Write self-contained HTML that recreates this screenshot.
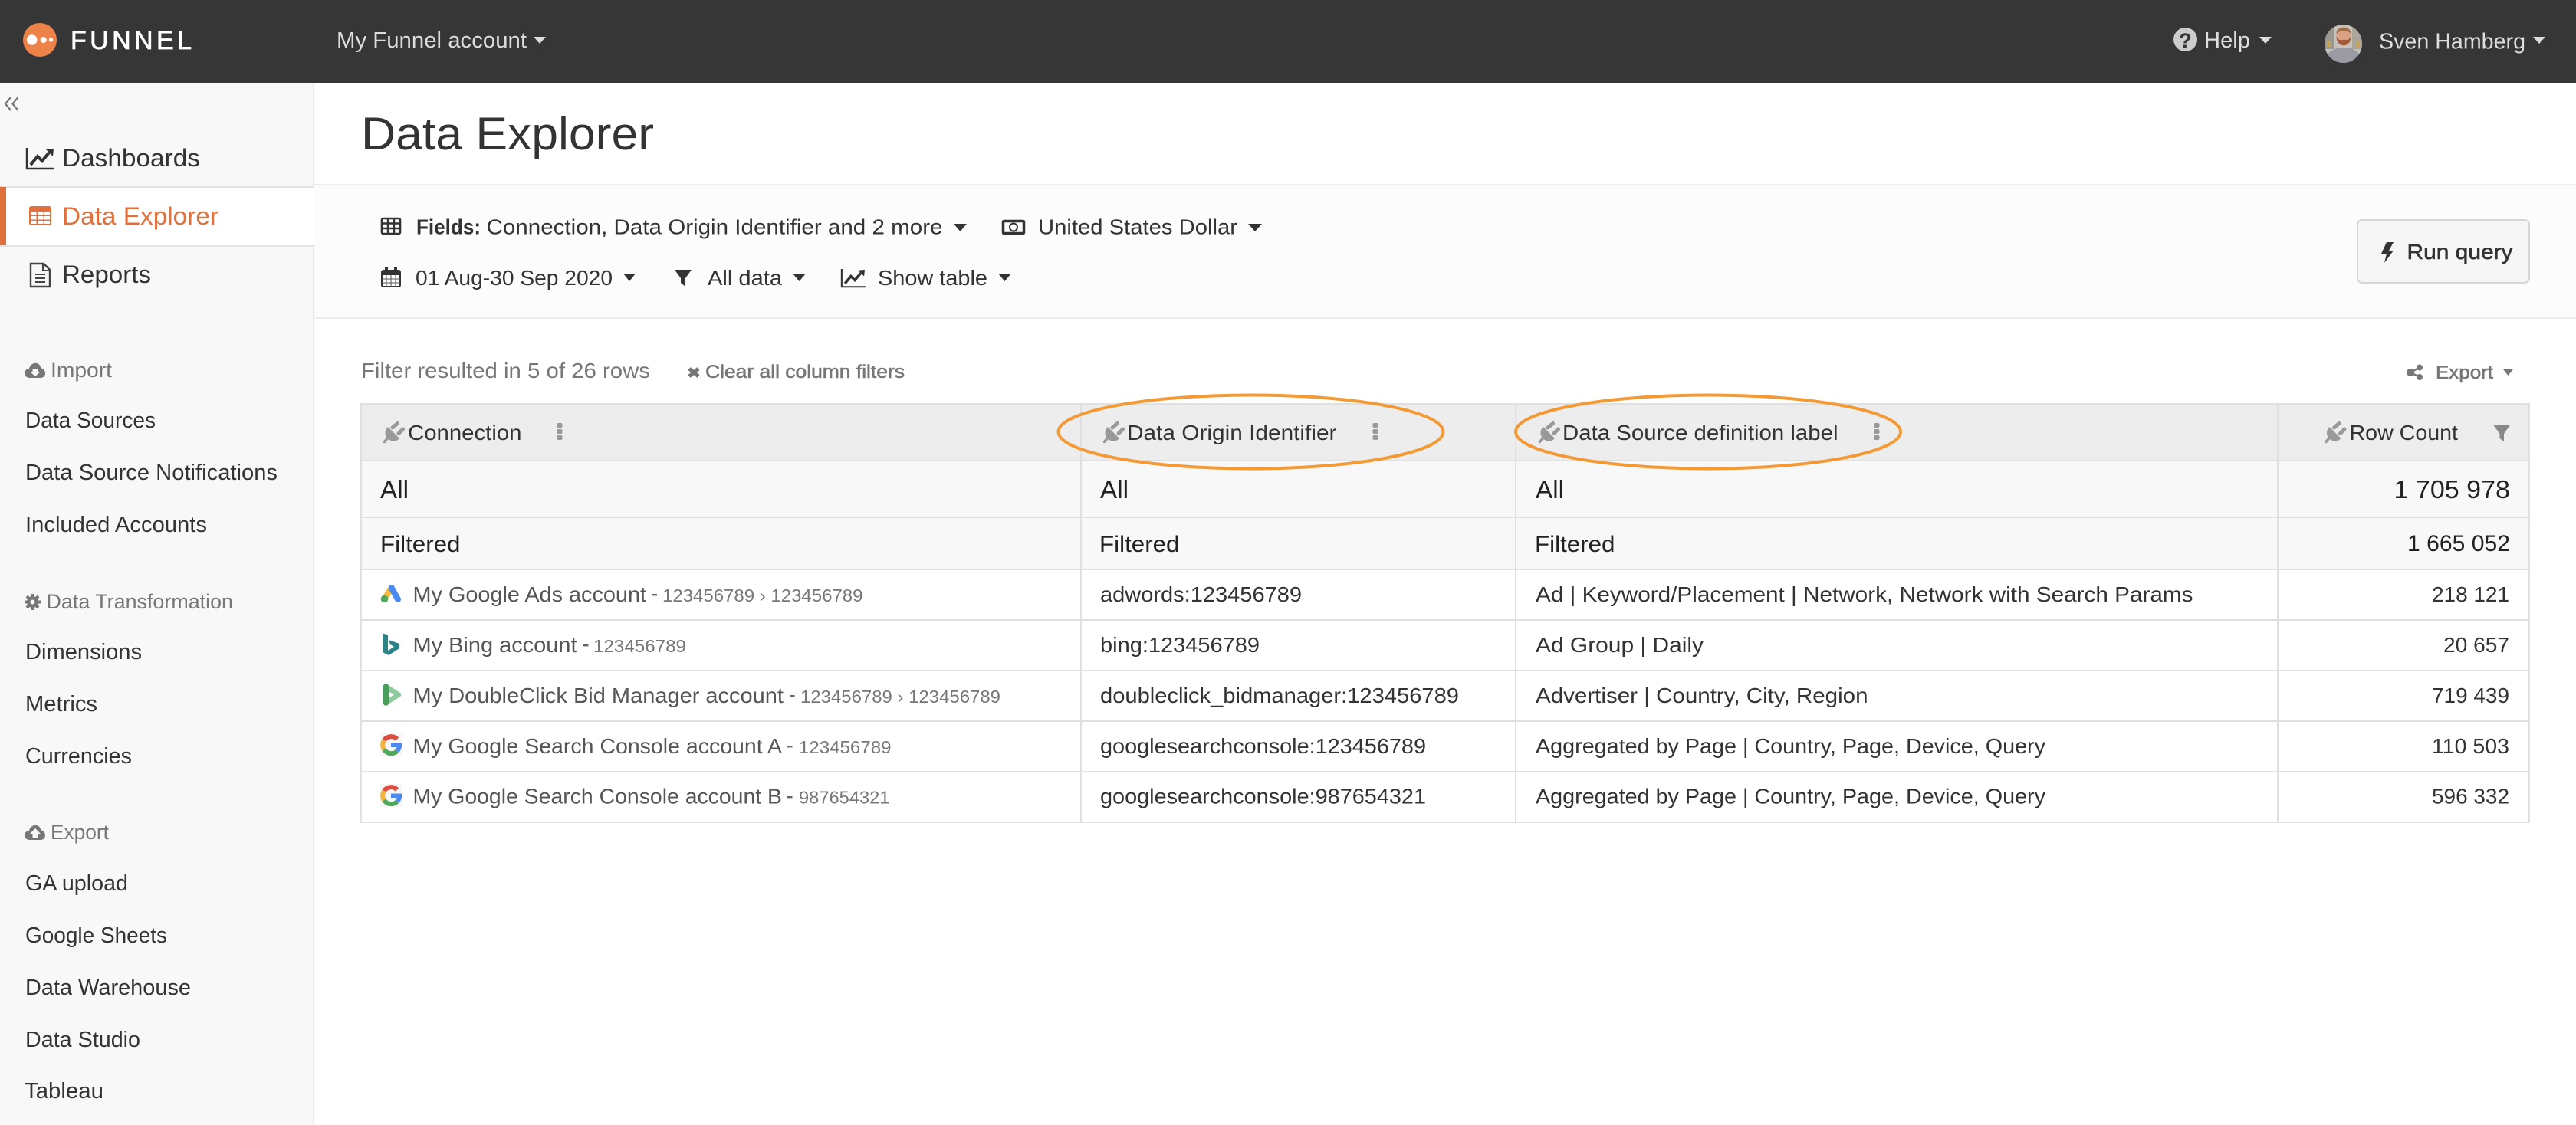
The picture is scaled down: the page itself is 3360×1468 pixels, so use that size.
<!DOCTYPE html>
<html><head><meta charset="utf-8"><title>Data Explorer</title>
<style>
html,body{margin:0;padding:0;background:#fff;width:3360px;height:1468px;overflow:hidden}
svg{display:block}
text{font-family:"Liberation Sans",sans-serif;white-space:pre}
.n{font-size:32px;fill:#333}
.s{font-size:29px;fill:#333}
.h{font-size:27px;fill:#777}
.t{font-size:28px;fill:#333}
.m{font-size:28px;fill:#555}
.id{font-size:23.5px;fill:#777}
.d{font-size:28px;fill:#333}
.a{font-size:33px;fill:#222}
.f{font-size:30px;fill:#222}
.th{font-size:28px;fill:#333}
.top{font-size:29px;fill:#ddd}
</style></head><body>
<svg width="3360" height="1468" viewBox="0 0 3360 1468" xmlns="http://www.w3.org/2000/svg">
<defs>
<g id="plug" fill="#999"><path d="M6 7 L21 22 C16 28 8 25 5 22 C2 18 1 12 6 7Z"/><path d="M12 8 L18.500 2.500 M20 15.500 L25.500 10" stroke="#999" stroke-width="5" stroke-linecap="round"/><path d="M7 20 L1.500 26.500" stroke="#999" stroke-width="3.500" stroke-linecap="round"/></g>
<g id="keb" fill="#999"><rect x="0" y="0" width="7" height="6" rx="2"/><rect x="0" y="8" width="7" height="6" rx="2"/><rect x="0" y="16" width="7" height="6" rx="2"/></g>
<g id="g"><rect x="0" y="0" width="28" height="30" fill="#f6f6f6"/><g fill="none" stroke-width="6"><path d="M22 7.500 A11 11 0 0 0 5 9" stroke="#dc4e41"/><path d="M5 9 A11 11 0 0 0 5 21" stroke="#f2b53c"/><path d="M5 21 A11 11 0 0 0 22 23" stroke="#4fa95c"/><path d="M22 23 A11 11 0 0 0 25 15" stroke="#4c8af0"/></g><rect x="14" y="12.500" width="14" height="5.500" fill="#4c8af0"/></g>
<g id="chart"><path d="M1 0 V27 H37" fill="none" stroke="#333" stroke-width="2.400"/><path d="M6 22 L15 11 L21 17 L30 6" fill="none" stroke="#333" stroke-width="4"/><polygon points="26,2 36,1 35,11" fill="#333"/></g>
<clipPath id="av"><ellipse cx="3056.500" cy="57" rx="24.500" ry="25"/></clipPath>
</defs>

<!-- header -->
<rect x="0" y="0" width="3360" height="108" fill="#363636"/>
<circle cx="52" cy="52" r="22" fill="#ee8349"/>
<circle cx="41.700" cy="52" r="6.800" fill="#fff"/><circle cx="56.700" cy="52" r="4" fill="#fff"/><circle cx="66.500" cy="52" r="2.600" fill="#fff"/>
<text x="92" y="64" font-size="34" fill="#fff" stroke="#fff" stroke-width=".7" textLength="158" lengthAdjust="spacing">FUNNEL</text>
<text x="439" y="62" class="top" textLength="248" lengthAdjust="spacingAndGlyphs">My Funnel account</text>
<polygon points="696,48 712,48 704,57" fill="#ddd"/>
<circle cx="2850.500" cy="51.500" r="15.500" fill="#ccc"/>
<text x="2850.500" y="62" font-size="27" font-weight="bold" fill="#363636" text-anchor="middle">?</text>
<text x="2875" y="62" class="top" textLength="60" lengthAdjust="spacingAndGlyphs">Help</text>
<polygon points="2947,48 2963,48 2955,57" fill="#ddd"/>
<g clip-path="url(#av)">
<rect x="3030" y="30" width="54" height="55" fill="#c6c2ba"/>
<rect x="3032" y="32" width="13" height="32" fill="#9a978f"/><rect x="3068" y="32" width="13" height="32" fill="#aba59a"/>
<rect x="3035" y="54" width="5" height="7" fill="#c4a35a"/><rect x="3073" y="54" width="5" height="7" fill="#c4a35a"/>
<path d="M3032 84 C3033 66 3046 62 3057 62 C3068 62 3080 66 3081 84Z" fill="#9a9ba5"/>
<ellipse cx="3057" cy="47" rx="9.500" ry="12" fill="#d9a283"/>
<path d="M3047.500 48 C3048 63 3066 63 3066.500 48 L3063 52 H3051Z" fill="#a2593a"/>
<path d="M3047.500 44 C3047 33 3067 33 3066.500 44 C3062 39 3052 39 3047.500 44Z" fill="#a06b47"/>
</g>
<text x="3103" y="63.500" class="top" textLength="191" lengthAdjust="spacingAndGlyphs">Sven Hamberg</text>
<polygon points="3304,48 3320,48 3312,57" fill="#ddd"/>

<!-- sidebar -->
<rect x="0" y="108" width="409" height="1360" fill="#f8f8f8"/>
<rect x="408" y="108" width="2" height="1360" fill="#eaeaea"/>
<path d="M14 127 L7 135.500 L14 144 M23.500 127 L16.500 135.500 L23.500 144" fill="none" stroke="#777" stroke-width="2.200"/>
<use href="#chart" x="34" y="193"/>
<text x="81" y="217" class="n" textLength="180" lengthAdjust="spacingAndGlyphs">Dashboards</text>
<rect x="0" y="243.500" width="409" height="77.500" fill="#fff"/>
<rect x="0" y="243" width="409" height="2" fill="#e3e3e3"/><rect x="0" y="320" width="409" height="2" fill="#e3e3e3"/>
<rect x="0" y="244" width="8" height="76" fill="#e0703c"/>
<rect x="38" y="269" width="29" height="25" rx="3" fill="#e0703c"/>
<g fill="#fff"><rect x="40.500" y="276" width="7" height="4.500"/><rect x="49.500" y="276" width="7" height="4.500"/><rect x="58" y="276" width="7" height="4.500"/><rect x="40.500" y="282" width="7" height="4.500"/><rect x="49.500" y="282" width="7" height="4.500"/><rect x="58" y="282" width="7" height="4.500"/><rect x="40.500" y="288" width="7" height="4"/><rect x="49.500" y="288" width="7" height="4"/><rect x="58" y="288" width="7" height="4"/></g>
<text x="81" y="293" class="n" style="fill:#e0703c" textLength="204" lengthAdjust="spacingAndGlyphs">Data Explorer</text>
<path d="M40 344 H57 L65 352 V374 H40Z" fill="none" stroke="#444" stroke-width="2.400"/><path d="M56 344 V353 H65" fill="none" stroke="#444" stroke-width="2"/><path d="M46 358 H59 M46 363 H59 M46 368 H59" stroke="#444" stroke-width="2"/>
<text x="81" y="369" class="n" textLength="116" lengthAdjust="spacingAndGlyphs">Reports</text>

<path d="M39 493 C33 493 31 488 33 484 C34 482 36 481 38 481 C39 476 44 473 48 474 C51 475 53 477 53 480 C57 481 59 484 59 487 C59 491 56 493 53 493Z" fill="#777"/><path d="M42.500 481 H49.500 V485 H53 L46 491 L39 485 H42.500Z" fill="#f8f8f8"/>
<text x="66" y="492" class="h" textLength="80" lengthAdjust="spacingAndGlyphs">Import</text>
<text x="33" y="558" class="s" textLength="170" lengthAdjust="spacingAndGlyphs">Data Sources</text>
<text x="33" y="626" class="s" textLength="329" lengthAdjust="spacingAndGlyphs">Data Source Notifications</text>
<text x="33" y="694" class="s" textLength="237" lengthAdjust="spacingAndGlyphs">Included Accounts</text>
<path d="M42.500 775 V796 M32 785.500 H53 M35 778 L50 793 M50 778 L35 793" stroke="#777" stroke-width="4"/><circle cx="42.500" cy="785.500" r="7.500" fill="#777"/><circle cx="42.500" cy="785.500" r="3" fill="#f8f8f8"/>
<text x="60.500" y="794" class="h" textLength="243.500" lengthAdjust="spacingAndGlyphs">Data Transformation</text>
<text x="33" y="860" class="s" textLength="152" lengthAdjust="spacingAndGlyphs">Dimensions</text>
<text x="33" y="928" class="s" textLength="94" lengthAdjust="spacingAndGlyphs">Metrics</text>
<text x="33" y="996" class="s" textLength="139" lengthAdjust="spacingAndGlyphs">Currencies</text>
<path d="M39 1096 C33 1096 31 1091 33 1087 C34 1085 36 1084 38 1084 C39 1079 44 1076 48 1077 C51 1078 53 1080 53 1083 C57 1084 59 1087 59 1090 C59 1094 56 1096 53 1096Z" fill="#777"/><path d="M42.500 1094 H49.500 V1088 H53 L46 1081 L39 1088 H42.500Z" fill="#f8f8f8"/>
<text x="66" y="1095" class="h" textLength="76" lengthAdjust="spacingAndGlyphs">Export</text>
<text x="33" y="1162" class="s" textLength="134" lengthAdjust="spacingAndGlyphs">GA upload</text>
<text x="33" y="1230" class="s" textLength="185" lengthAdjust="spacingAndGlyphs">Google Sheets</text>
<text x="33" y="1298" class="s" textLength="216" lengthAdjust="spacingAndGlyphs">Data Warehouse</text>
<text x="33" y="1366" class="s" textLength="150" lengthAdjust="spacingAndGlyphs">Data Studio</text>
<text x="32" y="1433" class="s" textLength="103" lengthAdjust="spacingAndGlyphs">Tableau</text>

<!-- title -->
<text x="471" y="195" font-size="60" fill="#333" textLength="382" lengthAdjust="spacingAndGlyphs">Data Explorer</text>
<rect x="410" y="240" width="2950" height="2" fill="#eee"/>
<rect x="410" y="242" width="2950" height="172" fill="#fcfcfc"/>
<rect x="410" y="414" width="2950" height="2" fill="#eee"/>

<!-- toolbar -->
<rect x="498" y="285" width="24" height="20" rx="2" fill="none" stroke="#333" stroke-width="2.600"/>
<path d="M498 291.500 H522 M498 298 H522 M506 285 V305 M514 285 V305" stroke="#333" stroke-width="2.400"/>
<text x="543" y="305.500" class="t" font-weight="bold" textLength="84" lengthAdjust="spacingAndGlyphs">Fields:</text>
<text x="634.500" y="305.500" class="t" textLength="595" lengthAdjust="spacingAndGlyphs">Connection, Data Origin Identifier and 2 more</text>
<polygon points="1244,292 1261,292 1252.500,302" fill="#333"/>
<rect x="1308.500" y="288.500" width="27" height="16" rx="1" fill="none" stroke="#333" stroke-width="3.500"/><circle cx="1322" cy="296.500" r="5" fill="none" stroke="#333" stroke-width="2"/>
<text x="1354" y="305.500" class="t" textLength="260" lengthAdjust="spacingAndGlyphs">United States Dollar</text>
<polygon points="1628,292 1646,292 1637,302" fill="#333"/>

<rect x="498" y="353" width="24" height="21" rx="2" fill="#fff" stroke="#333" stroke-width="2"/>
<path d="M498 356.500 H522" stroke="#333" stroke-width="5"/><path d="M498 364 H522 M498 369 H522 M504 359 V374 M510 359 V374 M516 359 V374" stroke="#555" stroke-width="1"/>
<rect x="502" y="348" width="4" height="9" rx="1.500" fill="#333"/><rect x="514" y="348" width="4" height="9" rx="1.500" fill="#333"/>
<text x="542" y="372" class="t" textLength="257" lengthAdjust="spacingAndGlyphs">01 Aug-30 Sep 2020</text>
<polygon points="813,357 829,357 821,367" fill="#333"/>
<path d="M880 352 H902 L894 363 V374 L888 369 V363Z" fill="#333"/>
<text x="923" y="372" class="t" textLength="97" lengthAdjust="spacingAndGlyphs">All data</text>
<polygon points="1034,357 1051,357 1042.500,367" fill="#333"/>
<use href="#chart" transform="translate(1097 351) scale(.86)"/>
<text x="1145" y="372" class="t" textLength="143" lengthAdjust="spacingAndGlyphs">Show table</text>
<polygon points="1302,357 1319,357 1310.500,367" fill="#333"/>

<rect x="3075" y="287" width="224" height="82" rx="6" fill="#f6f6f6" stroke="#d6d6d6" stroke-width="2"/>
<polygon points="3113,316 3122,316 3116,327 3122,327 3110,343 3113,331 3106,331" fill="#333"/>
<text x="3139.500" y="338" class="t" stroke="#333" stroke-width=".6" textLength="138" lengthAdjust="spacingAndGlyphs">Run query</text>

<!-- filter line -->
<text x="471" y="493" class="h" style="font-size:28px" textLength="377" lengthAdjust="spacingAndGlyphs">Filter resulted in 5 of 26 rows</text>
<path d="M899 481 L911 491 M911 481 L899 491" stroke="#777" stroke-width="5"/>
<text x="920" y="493" font-size="24" fill="#777" stroke="#777" stroke-width=".6" textLength="260" lengthAdjust="spacingAndGlyphs">Clear all column filters</text>
<circle cx="3144" cy="486" r="5" fill="#777"/><circle cx="3156" cy="479.500" r="4" fill="#777"/><circle cx="3156" cy="492" r="4" fill="#777"/><path d="M3144 486 L3156 479.500 M3144 486 L3156 492" stroke="#777" stroke-width="2.500"/>
<text x="3177" y="494" font-size="24" fill="#777" stroke="#777" stroke-width=".6" textLength="75" lengthAdjust="spacingAndGlyphs">Export</text>
<polygon points="3265,482 3278,482 3271.500,490" fill="#777"/>

<!-- table -->
<rect x="471" y="527" width="2828" height="74" fill="#ededed"/>
<rect x="471" y="601" width="2828" height="142" fill="#f8f8f8"/>
<g fill="#e0e0e0">
<rect x="470" y="526" width="2830" height="2"/>
<rect x="470" y="600" width="2830" height="2"/>
<rect x="470" y="674" width="2830" height="2"/>
<rect x="470" y="742" width="2830" height="2"/>
<rect x="470" y="808" width="2830" height="2"/>
<rect x="470" y="874" width="2830" height="2"/>
<rect x="470" y="940" width="2830" height="2"/>
<rect x="470" y="1006" width="2830" height="2"/>
<rect x="470" y="1072" width="2830" height="2"/>
<rect x="470" y="526" width="2" height="548"/>
<rect x="1409" y="526" width="2" height="548"/>
<rect x="1976" y="526" width="2" height="548"/>
<rect x="2970" y="526" width="2" height="548"/>
<rect x="3298" y="526" width="2" height="548"/>
</g>

<!-- header row -->
<use href="#plug" x="500" y="550"/>
<text x="532" y="574" class="th" textLength="148.500" lengthAdjust="spacingAndGlyphs">Connection</text>
<use href="#keb" x="726.500" y="552"/>
<use href="#plug" x="1439" y="550"/>
<text x="1470" y="574" class="th" textLength="273.500" lengthAdjust="spacingAndGlyphs">Data Origin Identifier</text>
<use href="#keb" x="1790.500" y="552"/>
<use href="#plug" x="2007" y="550"/>
<text x="2038" y="574" class="th" textLength="359.500" lengthAdjust="spacingAndGlyphs">Data Source definition label</text>
<use href="#keb" x="2444.500" y="552"/>
<use href="#plug" x="3032.500" y="550"/>
<text x="3064.500" y="574" class="th" textLength="141.500" lengthAdjust="spacingAndGlyphs">Row Count</text>
<path d="M3252 554 H3274.500 L3266 566 V576 L3260.500 572 V566Z" fill="#888"/>

<!-- all / filtered -->
<text x="496" y="650" class="a" textLength="37" lengthAdjust="spacingAndGlyphs">All</text>
<text x="1435" y="650" class="a" textLength="37" lengthAdjust="spacingAndGlyphs">All</text>
<text x="2003" y="650" class="a" textLength="37" lengthAdjust="spacingAndGlyphs">All</text>
<text x="3122.500" y="650" class="a" textLength="151.500" lengthAdjust="spacingAndGlyphs">1 705 978</text>
<text x="496" y="720" class="f" textLength="104.500" lengthAdjust="spacingAndGlyphs">Filtered</text>
<text x="1434" y="720" class="f" textLength="104.500" lengthAdjust="spacingAndGlyphs">Filtered</text>
<text x="2002" y="720" class="f" textLength="104.500" lengthAdjust="spacingAndGlyphs">Filtered</text>
<text x="3140" y="719" class="f" textLength="134" lengthAdjust="spacingAndGlyphs">1 665 052</text>

<!-- row 1 -->
<path d="M510.700 767 L501.500 781.500" stroke="#f5bb3d" stroke-width="8" stroke-linecap="round"/>
<path d="M510.700 767 L519 782" stroke="#4c8af0" stroke-width="8" stroke-linecap="round"/>
<circle cx="501.500" cy="781.500" r="4.800" fill="#4fa95c"/>
<text x="538.500" y="785" class="m" textLength="304.500" lengthAdjust="spacingAndGlyphs">My Google Ads account</text>
<rect x="850" y="775" width="7" height="2.400" fill="#666"/>
<text x="864" y="785" class="id" textLength="261.500" lengthAdjust="spacingAndGlyphs">123456789 › 123456789</text>
<text x="1435" y="785" class="d" textLength="263" lengthAdjust="spacingAndGlyphs">adwords:123456789</text>
<text x="2003" y="785" class="d" textLength="857.500" lengthAdjust="spacingAndGlyphs">Ad | Keyword/Placement | Network, Network with Search Params</text>
<text x="3172" y="785" class="d" textLength="101" lengthAdjust="spacingAndGlyphs">218 121</text>

<!-- row 2 -->
<polygon points="499,826 506,829 506,849 514,844 509,841 507,835 521,840 521,846 507,855 499,851" fill="#2b8388"/>
<text x="538.500" y="851" class="m" textLength="214" lengthAdjust="spacingAndGlyphs">My Bing account</text>
<rect x="761" y="841" width="6.500" height="2.400" fill="#666"/>
<text x="774" y="851" class="id" textLength="121" lengthAdjust="spacingAndGlyphs">123456789</text>
<text x="1435" y="851" class="d" textLength="208" lengthAdjust="spacingAndGlyphs">bing:123456789</text>
<text x="2003" y="851" class="d" textLength="219" lengthAdjust="spacingAndGlyphs">Ad Group | Daily</text>
<text x="3187" y="851" class="d" textLength="86" lengthAdjust="spacingAndGlyphs">20 657</text>

<!-- row 3 -->
<path d="M503.500 896 L520 906.500 L503.500 917" fill="none" stroke="#8fcc9b" stroke-width="6.500" stroke-linejoin="round" stroke-linecap="round"/>
<path d="M503.500 896 V917" stroke="#4a9e5c" stroke-width="7.500" stroke-linecap="round"/>
<text x="538.500" y="917" class="m" textLength="483.500" lengthAdjust="spacingAndGlyphs">My DoubleClick Bid Manager account</text>
<rect x="1030" y="907" width="6.500" height="2.400" fill="#666"/>
<text x="1044" y="917" class="id" textLength="261" lengthAdjust="spacingAndGlyphs">123456789 › 123456789</text>
<text x="1435" y="917" class="d" textLength="468" lengthAdjust="spacingAndGlyphs">doubleclick_bidmanager:123456789</text>
<text x="2003" y="917" class="d" textLength="433.500" lengthAdjust="spacingAndGlyphs">Advertiser | Country, City, Region</text>
<text x="3172" y="917" class="d" textLength="101" lengthAdjust="spacingAndGlyphs">719 439</text>

<!-- row 4 -->
<use href="#g" x="496" y="957"/>
<text x="538.500" y="983" class="m" textLength="481.500" lengthAdjust="spacingAndGlyphs">My Google Search Console account A</text>
<rect x="1027" y="973" width="6.500" height="2.400" fill="#666"/>
<text x="1042" y="983" class="id" textLength="120.500" lengthAdjust="spacingAndGlyphs">123456789</text>
<text x="1435" y="983" class="d" textLength="425" lengthAdjust="spacingAndGlyphs">googlesearchconsole:123456789</text>
<text x="2003" y="983" class="d" textLength="665" lengthAdjust="spacingAndGlyphs">Aggregated by Page | Country, Page, Device, Query</text>
<text x="3172" y="983" class="d" textLength="101" lengthAdjust="spacingAndGlyphs">110 503</text>

<!-- row 5 -->
<use href="#g" x="496" y="1023"/>
<text x="538.500" y="1048.500" class="m" textLength="481.500" lengthAdjust="spacingAndGlyphs">My Google Search Console account B</text>
<rect x="1027" y="1039" width="6.500" height="2.400" fill="#666"/>
<text x="1042" y="1048.500" class="id" textLength="118.500" lengthAdjust="spacingAndGlyphs">987654321</text>
<text x="1435" y="1048.500" class="d" textLength="425" lengthAdjust="spacingAndGlyphs">googlesearchconsole:987654321</text>
<text x="2003" y="1048.500" class="d" textLength="665" lengthAdjust="spacingAndGlyphs">Aggregated by Page | Country, Page, Device, Query</text>
<text x="3172" y="1048.500" class="d" textLength="101" lengthAdjust="spacingAndGlyphs">596 332</text>

<!-- annotations -->
<ellipse cx="1631.500" cy="563.500" rx="251" ry="48" fill="none" stroke="#f39a36" stroke-width="4"/>
<ellipse cx="2228" cy="563.500" rx="251" ry="48" fill="none" stroke="#f39a36" stroke-width="4"/>
</svg>
</body></html>
